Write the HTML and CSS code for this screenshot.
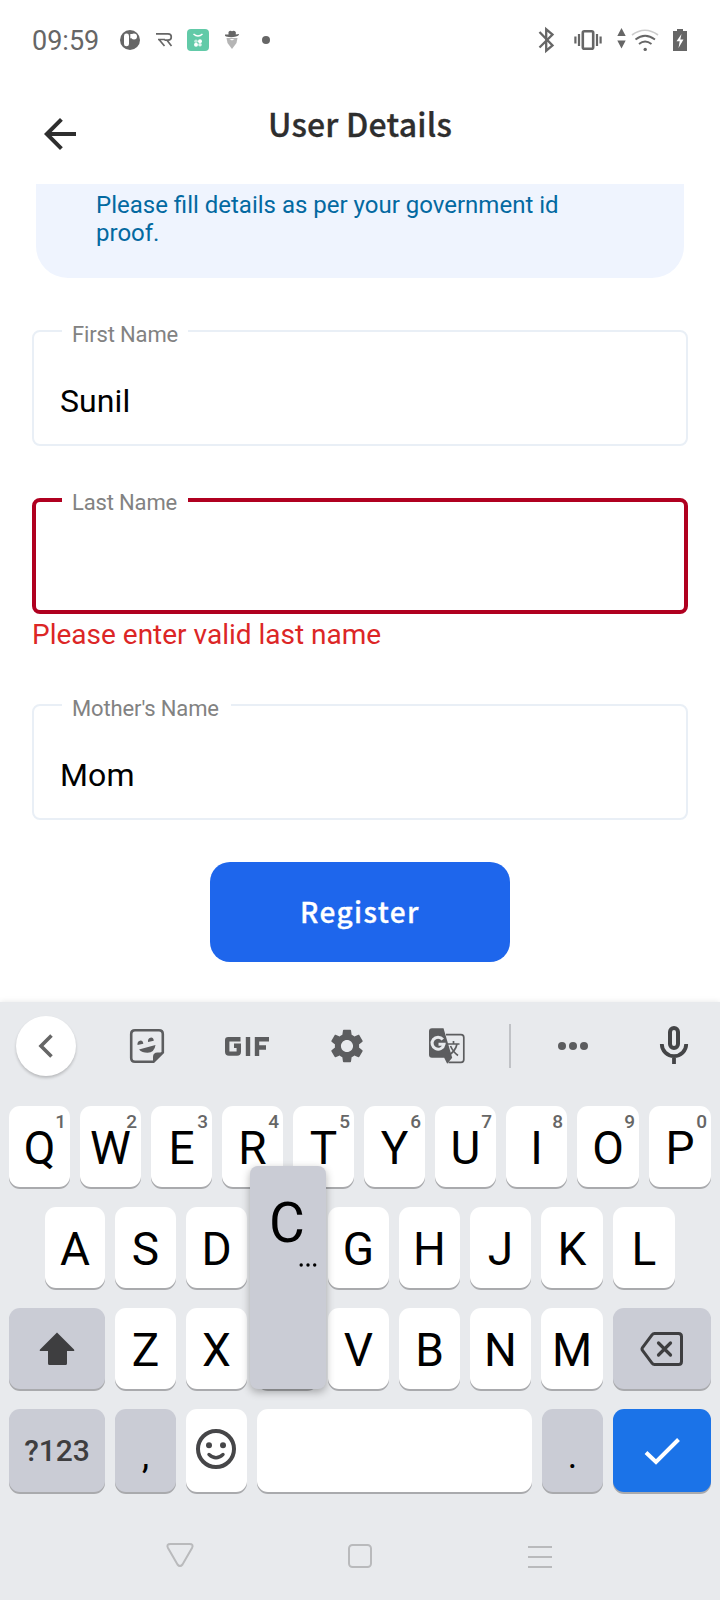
FILE: index.html
```html
<!DOCTYPE html>
<html lang="en">
<head>
<meta charset="utf-8">
<title>User Details</title>
<link rel="stylesheet" href="styles.css">
</head>
<body>
<div class="screen">
  <div class="status">
    <span class="time">09:59</span>
    <svg class="status-left" width="160" height="30" viewBox="0 0 160 30">
      <circle cx="10" cy="15" r="10" fill="#666"/>
      <rect x="4" y="8.500" width="5" height="12.800" rx="2.400" fill="#fff"/>
      <circle cx="14" cy="11.500" r="3" fill="#fff"/>
      <path d="M10.300 9h2v3.500l-2 1z" fill="#fff"/>
      <path d="M36 8.800h12q3.300 0 3.300 3.200t-3.300 3.200h-3.500M39 14.500l5.500 6.500M38 14.500h7M47 15.200l4.500 5.800" fill="none" stroke="#666" stroke-width="1.700"/>
      <rect x="67" y="4" width="22" height="22" rx="4" fill="#62caa8"/>
      <path d="M73.500 9q4.500 4 9 0" fill="none" stroke="#fff" stroke-width="1.500"/>
      <g fill="#fff"><circle cx="76" cy="16.200" r="1.800" opacity=".6"/><circle cx="80" cy="16.200" r="2"/><circle cx="76" cy="19.800" r="2"/><circle cx="80" cy="19.800" r="1.800" opacity=".8"/></g>
      <path d="M106.500 13l1 5 4.500 6 4.500-6 1-5z" fill="#b5b5b5"/>
      <path d="M108.500 9.500V7q1.500-2 3.500-.8 2-1.200 3.800.8v2.500l3.200-.5q0 2-4 2.800-4 .8-9-.3-1.500-.5-1-2z" fill="#666"/>
      <path d="M109.500 14h5l-2.500 1.500z" fill="#fff"/>
      <circle cx="146" cy="15" r="4" fill="#666"/>
    </svg>
    <svg class="status-right" width="152" height="30" viewBox="0 0 152 30">
      <path d="M4.500 7l13 13.500-6.300 5.200V4.300l6.300 5.200-13 13" fill="none" stroke="#666" stroke-width="2.300"/>
      <rect x="47.800" y="6.300" width="10.400" height="17.400" rx="1.500" fill="none" stroke="#666" stroke-width="2.600"/>
      <path d="M40.400 11.500v7M44 9v12M62 9v12M65.600 11.500v7" stroke="#666" stroke-width="2.200"/>
      <path d="M86.500 3l4.200 8h-8.400zM86.500 23.500l4.200-8h-8.400z" fill="#666"/>
      <path d="M97 10q13-9.500 26 0" fill="none" stroke="#ccc" stroke-width="1.700"/>
      <path d="M100.500 14.500q9.500-7.500 19.500 0M104 19q6-5 12.500 0" fill="none" stroke="#666" stroke-width="1.800"/>
      <circle cx="110.200" cy="24.400" r="1.700" fill="#666"/>
      <path d="M138 6h4V4h6v2h4v20h-14z" fill="#666"/>
      <path d="M146.500 9l-5 7.300h3.200l-1.200 6.700 5-8.500h-3.200z" fill="#fff"/>
    </svg>
  </div>

  <div class="header">
    <svg class="back" width="48" height="48" viewBox="0 0 24 24"><path d="M20 11H7.830l5.590-5.590L12 4l-8 8 8 8 1.410-1.410L7.830 13H20z" fill="#2e2e2e"/></svg>
    <h1 class="title">User Details</h1>
  </div>

  <div class="form">
    <p class="info">Please fill details as per your government id proof.</p>
    <div class="field"><label class="label">First Name</label><span class="value">Sunil</span></div>
    <div class="field field-error"><label class="label">Last Name</label></div>
    <p class="error">Please enter valid last name</p>
    <div class="field"><label class="label label-long">Mother's Name</label><span class="value">Mom</span></div>
    <button class="register">Register</button>
  </div>

  <div class="keyboard">
    <div class="tools">
      <div class="collapse"><svg width="60" height="60" viewBox="0 0 60 60"><path d="M35.500 19.500L25 30l10.500 10.500" fill="none" stroke="#666" stroke-width="3.600"/></svg></div>
      <svg class="tool-strip" width="620" height="60" viewBox="80 1016 620 60">
        <path d="M135 1030.200h24q3.800 0 3.800 3.800v18.500l-9.300 9.300H135q-3.800 0-3.800-3.800V1034q0-3.800 3.800-3.800z" fill="none" stroke="#5c5d5f" stroke-width="2.600"/>
        <path d="M153 1062v-5q0-4.500 4.500-4.500h6z" fill="#5c5d5f"/>
        <path d="M137.500 1045a2.700 3.500 0 0 1 5.800-1.200zM148 1042a2.700 3.500 0 0 1 5.800-1.200zM139 1049.500l16.500-4.500q-1 7.500-8 7.800-5.500 0-8.500-3.300z" fill="#5c5d5f"/>
        <path d="M240.500 1039.200h-12.300q-1 0-1 1v11.600q0 1.800 1.800 1.800h8q1.800 0 1.800-1.800v-6H234M248 1037v19M257 1056v-16.800h12M257 1047.500h9" fill="none" stroke="#5c5d5f" stroke-width="4.400"/>
        <g transform="translate(326.800 1025.800) scale(1.683)"><path fill="#5c5d5f" d="M19.140 12.940c.04-.3.060-.61.060-.94 0-.32-.02-.64-.07-.94l2.030-1.580c.18-.14.230-.41.120-.61l-1.920-3.320c-.12-.22-.37-.29-.59-.22l-2.390.96c-.5-.38-1.030-.7-1.620-.94l-.36-2.540c-.04-.24-.24-.41-.48-.41h-3.840c-.24 0-.43.170-.47.410l-.36 2.540c-.59.240-1.130.570-1.620.94l-2.390-.96c-.22-.08-.47 0-.59.220L2.740 8.870c-.12.210-.08.470.12.610l2.030 1.580c-.05.3-.09.630-.09.940s.02.640.07.940l-2.030 1.580c-.18.140-.23.410-.12.610l1.920 3.320c.12.220.37.290.59.220l2.390-.96c.5.380 1.030.7 1.620.94l.36 2.540c.05.240.24.410.48.410h3.840c.24 0 .44-.17.470-.41l.36-2.540c.59-.24 1.130-.56 1.620-.94l2.390.96c.22.080.47 0 .59-.22l1.920-3.320c.12-.22.070-.47-.12-.61l-2.010-1.580zM12 15.600c-1.980 0-3.600-1.620-3.600-3.600s1.620-3.600 3.600-3.600 3.600 1.620 3.600 3.600-1.620 3.600-3.600 3.600z"/></g>
        <path d="M446 1034.700h15q2.800 0 2.800 2.800v22q0 2.800-2.800 2.800h-12.500" fill="none" stroke="#5c5d5f" stroke-width="1.700"/>
        <path d="M432 1028.200h11.500l8.700 29.500-5 6-3-6H432q-3 0-3-3v-23.500q0-3 3-3z" fill="#5c5d5f"/>
        <path d="M442.800 1039.500a6 6 0 1 0 1.200 4.700h-5.500" fill="none" stroke="#e8eaed" stroke-width="3"/>
        <path d="M447.500 1044h12M453.500 1041v3M449 1055q6.500-4 8-11M450.500 1046q3 6.500 7.500 9.500" fill="none" stroke="#5c5d5f" stroke-width="1.700"/>
        <path d="M510 1024v44" stroke="#c0c2c6" stroke-width="2"/>
        <g fill="#5c5d5f"><circle cx="562" cy="1046" r="4"/><circle cx="573" cy="1046" r="4"/><circle cx="584" cy="1046" r="4"/></g>
        <rect x="670" y="1028" width="8" height="20" rx="4" fill="none" stroke="#444547" stroke-width="4"/>
        <path d="M661.800 1044a12.200 12.200 0 0 0 24.400 0M674 1056v8" fill="none" stroke="#444547" stroke-width="3.800"/>
      </svg>
    </div>
    <div class="rows">
      <div class="row">
        <div class="key">Q<span class="hint">1</span></div><div class="key">W<span class="hint">2</span></div><div class="key">E<span class="hint">3</span></div><div class="key">R<span class="hint">4</span></div><div class="key">T<span class="hint">5</span></div><div class="key">Y<span class="hint">6</span></div><div class="key">U<span class="hint">7</span></div><div class="key">I<span class="hint">8</span></div><div class="key key-grow">O<span class="hint">9</span></div><div class="key key-grow">P<span class="hint">0</span></div>
      </div>
      <div class="row row-inset">
        <div class="key key-first">A</div><div class="key">S</div><div class="key">D</div><div class="key"></div><div class="key">G</div><div class="key">H</div><div class="key">J</div><div class="key key-grow">K</div><div class="key key-grow">L</div>
      </div>
      <div class="row">
        <div class="key key-gray key-shift"><svg width="36" height="36" viewBox="0 0 36 36"><path d="M18 1.500L35 18.500q1 1.500-1 1.500h-6v12.500q0 1.500-1.500 1.500h-16q-1.500 0-1.500-1.500V20H2q-2 0-1-1.500z" fill="#3e3e40"/></svg></div>
        <div class="key">Z</div><div class="key">X</div>
        <div class="key key-pressed"><div class="popup">C<svg class="popup-more" width="18" height="4" viewBox="0 0 18 4"><circle cx="2.200" cy="2" r="1.700"/><circle cx="9" cy="2" r="1.700"/><circle cx="15.700" cy="2" r="1.700"/></svg></div></div>
        <div class="key">V</div><div class="key">B</div><div class="key">N</div><div class="key key-grow">M</div>
        <div class="key key-gray key-wide"><svg width="44" height="36" viewBox="0 0 44 36"><path d="M14.500 2.500h24q3 0 3 3v25q0 3-3 3h-24q-1.500 0-2.500-1.300L2.500 19.500q-1-1.500 0-3L12 3.800q1-1.300 2.500-1.300z" fill="none" stroke="#3e3e40" stroke-width="3"/><path d="M18.500 12l12 12M30.500 12l-12 12" stroke="#3e3e40" stroke-width="3.200" stroke-linecap="round"/></svg></div>
      </div>
      <div class="row row-last">
        <div class="key key-gray key-shift key-symbols">?123</div>
        <div class="key key-gray key-punct">,</div>
        <div class="key key-emoji"><svg width="42" height="42" viewBox="0 0 42 42"><circle cx="21" cy="21" r="18" fill="none" stroke="#464648" stroke-width="4"/><circle cx="14" cy="17.200" r="3" fill="#464648"/><circle cx="28" cy="17.200" r="3" fill="#464648"/><path d="M14 26.500q7 6.500 14 0" fill="none" stroke="#464648" stroke-width="3.400" stroke-linecap="round"/></svg></div>
        <div class="key key-space"></div>
        <div class="key key-gray key-punct">.</div>
        <div class="key key-enter key-wide"><svg width="36" height="28" viewBox="0 0 36 28"><path d="M2 15.500l10 9.500L34.500 2.500" fill="none" stroke="#fff" stroke-width="4"/></svg></div>
      </div>
    </div>
    <div class="nav">
      <svg width="390" height="30" viewBox="165 1541 390 30" fill="none" stroke="#b9babc" stroke-width="2">
        <path d="M170.500 1544h19q4.500 0 2.500 4l-9.500 16.500q-2.500 3-5 0L168 1548q-2-4 2.500-4z"/>
        <rect x="349" y="1545" width="22" height="22" rx="3.500"/>
        <path d="M528 1547h24M528 1557h24M528 1567h24"/>
      </svg>
    </div>
  </div>
</div>
</body>
</html>
```

FILE: styles.css
```css
* { box-sizing: border-box; }
body { margin: 0; background: #fff; font-family: Roboto, "Liberation Sans", sans-serif; }
p, h1 { margin: 0; font-weight: 400; }
svg { display: block; flex: none; }

.screen { width: 720px; height: 1600px; display: flex; flex-direction: column; overflow: hidden; }

/* status bar */
.status { height: 80px; padding: 0 33px 0 32px; display: flex; align-items: center; }
.time { width: 88px; font-size: 27px; line-height: 32px; color: #666; padding-top: 1px; white-space: nowrap; }
.status-left { margin-right: auto; }

/* app bar */
.header { height: 104px; padding: 20px 36px 0; display: grid; grid-template-columns: 48px 1fr 48px; align-items: start; }
.back { margin-top: 9.5px; }
.title { font: 500 32px/46px "Noto Sans CJK SC", "Noto Sans", sans-serif; letter-spacing: .2px; -webkit-text-stroke: .3px; color: #2e2e2e; text-align: center; white-space: nowrap; }

/* form */
.form { height: 818px; padding: 0 32px; display: flex; flex-direction: column; }
.info { height: 94px; margin: 0 4px 52px; padding: 7px 100px 0 60px; border-radius: 0 0 32px 32px; background: #eff4fe; color: #0369a1; font-size: 24px; line-height: 28px; }
.field { position: relative; height: 116px; flex: none; border: 2px solid #e9eff6; border-radius: 8px; padding: 49px 26px 0; }
.field-error { margin-top: 52px; border: 4px solid #b00020; }
.label { position: absolute; left: 28px; top: -10px; width: 126px; padding-left: 10px; background: #fff; color: #828282; font-size: 22px; line-height: 26px; letter-spacing: -.15px; white-space: nowrap; }
.label-long { width: 169px; }
.field-error .label { left: 26px; top: -12px; }
.value { display: block; font-size: 32px; line-height: 40px; letter-spacing: .1px; color: #000; }
.error { height: 90px; padding-top: 4px; font-size: 28px; line-height: 33px; color: #dc2626; }
.register { align-self: center; width: 300px; height: 100px; margin-top: 42px; padding: 0 0 2px; border: 0; border-radius: 20px; background: #1e66ec; color: #fff; font: 500 28px/40px "Noto Sans CJK SC", "Noto Sans", sans-serif; letter-spacing: 1.4px; -webkit-text-stroke: .3px; }

/* keyboard */
.keyboard { height: 598px; background: #e8eaed; box-shadow: 0 0 6px rgba(0, 0, 0, .1); display: flex; flex-direction: column; }
.tools { height: 104px; padding: 14px 16px 0; display: flex; align-items: flex-start; gap: 4px; }
.collapse { width: 60px; height: 60px; border-radius: 50%; background: #fff; box-shadow: 0 2px 3px rgba(0, 0, 0, .2); }
.rows { padding: 0 9px; display: flex; flex-direction: column; gap: 20px; }
.row { height: 81px; display: flex; gap: 10px; }
.row-inset { padding: 0 36px; }
.row-last { height: 83px; }
.key { position: relative; flex: 0 0 61px; display: flex; align-items: center; justify-content: center; border-radius: 11px; background: #fff; box-shadow: 0 2px 0 #a9aaad; color: #000; font-size: 46px; line-height: 54px; padding: 3px 0 0; }
.key svg { margin-top: -2px; }
.hint { position: absolute; right: 4px; top: 5px; font-size: 19px; line-height: 22px; font-weight: 500; color: #666; }
.key-first { flex-basis: 60px; }
.key-grow { flex-basis: 62px; }
.key-gray { background: #caccd5; }
.key-shift { flex-basis: 96px; }
.key-wide { flex-basis: 98px; }
.key-space { flex-basis: 275px; }
.key-enter { background: #1b73e8; }
.key-emoji { padding: 3px 1px 4px 0; }
.key-symbols { font-size: 30px; font-weight: 500; color: #3e3e40; padding: 0; }
.key-punct { font-size: 36px; padding: 10px 0 0; }
.key-pressed { background: #999; }
.popup { position: absolute; z-index: 2; left: -7px; bottom: 0; width: 76px; height: 223px; border-radius: 8px; background: #caccd5; box-shadow: 0 3px 8px rgba(0, 0, 0, .3); display: flex; flex-direction: column; align-items: center; padding: 25px 2px 0 0; font-size: 55px; line-height: 64px; }
.popup .popup-more { align-self: flex-end; margin: 8px 7px 0 0; }

/* system navigation */
.nav { padding-top: 49px; display: flex; justify-content: center; }
```
